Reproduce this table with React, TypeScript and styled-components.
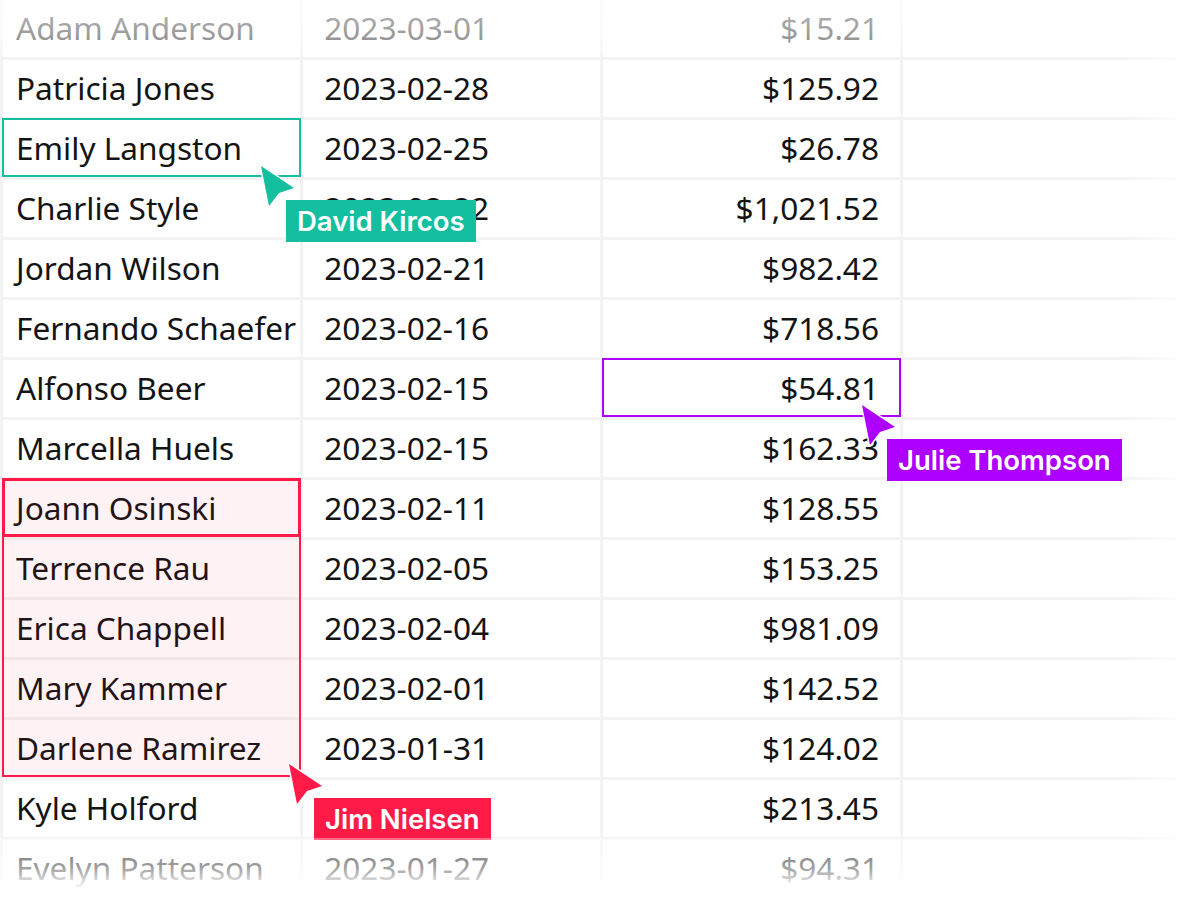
import React from "react";
import styled, { createGlobalStyle } from "styled-components";

const Global = createGlobalStyle`
  html, body { margin: 0; padding: 0; background: #ffffff; }
  body { width: 1200px; height: 900px; overflow: hidden; }
`;

type Row = { name: string; date: string; amount: string };

const rows: Row[] = [
  { name: "Adam Anderson", date: "2023-03-01", amount: "$15.21" },
  { name: "Patricia Jones", date: "2023-02-28", amount: "$125.92" },
  { name: "Emily Langston", date: "2023-02-25", amount: "$26.78" },
  { name: "Charlie Style", date: "2023-02-22", amount: "$1,021.52" },
  { name: "Jordan Wilson", date: "2023-02-21", amount: "$982.42" },
  { name: "Fernando Schaefer", date: "2023-02-16", amount: "$718.56" },
  { name: "Alfonso Beer", date: "2023-02-15", amount: "$54.81" },
  { name: "Marcella Huels", date: "2023-02-15", amount: "$162.33" },
  { name: "Joann Osinski", date: "2023-02-11", amount: "$128.55" },
  { name: "Terrence Rau", date: "2023-02-05", amount: "$153.25" },
  { name: "Erica Chappell", date: "2023-02-04", amount: "$981.09" },
  { name: "Mary Kammer", date: "2023-02-01", amount: "$142.52" },
  { name: "Darlene Ramirez", date: "2023-01-31", amount: "$124.02" },
  { name: "Kyle Holford", date: "2023-01-29", amount: "$213.45" },
  { name: "Evelyn Patterson", date: "2023-01-27", amount: "$94.31" },
];

const TEAL = "#14bf9f";
const PURPLE = "#ad00ff";
const RED = "#ff1a48";

const Sheet = styled.div`
  position: relative;
  display: grid;
  grid-template-columns: 297px 297px 297px 1fr;
  grid-auto-rows: 57px;
  gap: 3px;
  padding: 0 0 3px 3px;
  background: #f3f3f3;
  width: 1200px;
  box-sizing: border-box;
  overflow: hidden;
`;

const Cell = styled.div<{ $align?: "left" | "right" }>`
  background: #ffffff;
  display: flex;
  align-items: center;
  justify-content: ${(p) => (p.$align === "right" ? "flex-end" : "flex-start")};
  padding: ${(p) => (p.$align === "right" ? "0 21px 2px 0" : "0 0 2px 13px")};
  font-family: "Noto Sans", "Open Sans", sans-serif;
  font-size: 31.6px;
  color: #141414;
  white-space: nowrap;
  overflow: hidden;
`;

const Selection = styled.div<{
  $col: string;
  $row: string;
  $color: string;
  $width: number;
  $fill?: string;
}>`
  position: absolute;
  grid-column: ${(p) => p.$col};
  grid-row: ${(p) => p.$row};
  top: -2px;
  bottom: 0;
  left: -1px;
  right: -1px;
  border: ${(p) => p.$width}px solid ${(p) => p.$color};
  background: ${(p) => p.$fill || "transparent"};
  pointer-events: none;
  z-index: 1;
`;

const Fade = styled.div<{ $side: "top" | "bottom" | "right" }>`
  position: absolute;
  pointer-events: none;
  z-index: 3;
  ${(p) =>
    p.$side === "top"
      ? `top: 0; left: 0; right: 0; height: 60px;
         background: linear-gradient(to bottom, rgba(255,255,255,0.72) 0px, rgba(255,255,255,0.55) 40px, rgba(255,255,255,0) 60px);`
      : p.$side === "bottom"
      ? `top: 838px; left: 0; right: 0; bottom: 0;
         background: linear-gradient(to bottom, rgba(255,255,255,0.35) 0px, rgba(255,255,255,0.6) 30px, rgba(255,255,255,1) 52px);`
      : `top: 0; bottom: 0; right: 0; width: 80px;
         background: linear-gradient(to right, rgba(255,255,255,0) 0px, rgba(255,255,255,1) 70px);`}
`;

const CursorWrap = styled.div`
  position: absolute;
  z-index: 2;
  width: 0;
  height: 0;
`;

const Arrow = styled.svg`
  position: absolute;
  left: -4px;
  top: -4px;
  overflow: visible;
`;

const Tag = styled.div<{ $color: string }>`
  position: absolute;
  left: 25px;
  top: 34px;
  height: 42px;
  line-height: 42px;
  padding: 0 11px;
  background: ${(p) => p.$color};
  color: #ffffff;
  font-family: Inter, "Noto Sans", sans-serif;
  font-weight: 600;
  font-size: 27.5px;
  white-space: nowrap;
`;

function Cursor({ x, y, color, name }: { x: number; y: number; color: string; name: string }) {
  return (
    <CursorWrap style={{ left: x, top: y }}>
      <Arrow width="48" height="52" viewBox="-4 -4 48 52">
        <path
          d="M0 0 L33 22 L18 27 L8 40 Z"
          fill={color}
          stroke="#ffffff"
          strokeWidth="3"
          strokeLinejoin="round"
          paintOrder="stroke"
        />
      </Arrow>
      <Tag $color={color}>{name}</Tag>
    </CursorWrap>
  );
}

export default function App() {
  return (
    <>
      <Global />
      <Sheet>
        {rows.map((r) => (
          <React.Fragment key={r.name}>
            <Cell>{r.name}</Cell>
            <Cell>&nbsp;{r.date}</Cell>
            <Cell $align="right">{r.amount}</Cell>
            <Cell />
          </React.Fragment>
        ))}
        <Selection $col="1 / 2" $row="3 / 4" $color={TEAL} $width={2} />
        <Selection $col="3 / 4" $row="7 / 8" $color={PURPLE} $width={2} />
        <Selection
          $col="1 / 2"
          $row="9 / 14"
          $color={RED}
          $width={2}
          $fill="rgba(255, 26, 72, 0.06)"
        />
        <Selection $col="1 / 2" $row="9 / 10" $color={RED} $width={3} />
        <Cursor x={261} y={166} color={TEAL} name="David Kircos" />
        <Cursor x={862} y={405} color={PURPLE} name="Julie Thompson" />
        <Cursor x={289} y={764} color={RED} name="Jim Nielsen" />
        <Fade $side="top" />
        <Fade $side="bottom" />
        <Fade $side="right" />
      </Sheet>
    </>
  );
}
